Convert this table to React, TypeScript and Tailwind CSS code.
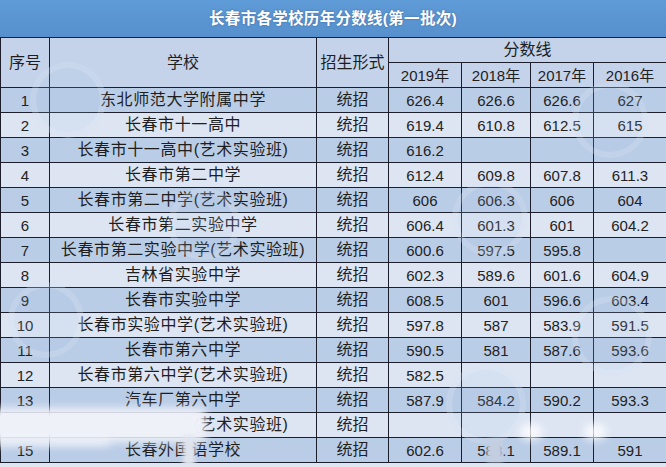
import React from 'react';

const ROWS: [string, string, string, string, string, string][] = [
  ['1', '东北师范大学附属中学', '626.4', '626.6', '626.6', '627'],
  ['2', '长春市十一高中', '619.4', '610.8', '612.5', '615'],
  ['3', '长春市十一高中(艺术实验班)', '616.2', '', '', ''],
  ['4', '长春市第二中学', '612.4', '609.8', '607.8', '611.3'],
  ['5', '长春市第二中学(艺术实验班)', '606', '606.3', '606', '604'],
  ['6', '长春市第二实验中学', '606.4', '601.3', '601', '604.2'],
  ['7', '长春市第二实验中学(艺术实验班)', '600.6', '597.5', '595.8', ''],
  ['8', '吉林省实验中学', '602.3', '589.6', '601.6', '604.9'],
  ['9', '长春市实验中学', '608.5', '601', '596.6', '603.4'],
  ['10', '长春市实验中学(艺术实验班)', '597.8', '587', '583.9', '591.5'],
  ['11', '长春市第六中学', '590.5', '581', '587.6', '593.6'],
  ['12', '长春市第六中学(艺术实验班)', '582.5', '', '', ''],
  ['13', '汽车厂第六中学', '587.9', '584.2', '590.2', '593.3'],
  ['14', '汽车厂第六中学(艺术实验班)', '', '', '', ''],
  ['15', '长春外国语学校', '602.6', '588.1', '589.1', '591'],
];

// faint round watermarks [left, top, size]
const MARKS: [number, number, number][] = [
  [30, 62, 76],
  [572, 82, 76],
  [168, 188, 72],
  [452, 180, 76],
  [8, 282, 76],
  [572, 296, 80],
  [446, 364, 80],
];

const cell = 'border border-[#1c1f2b] text-center p-0 leading-none';

export default function App() {
  return (
    <div className="relative w-[666px] h-[467px] overflow-hidden bg-[#dfe6f3] font-['Liberation_Sans','Noto_Sans_CJK_SC',sans-serif] text-[#1e1e1e]">
      {/* title bar */}
      <div className="h-[37px] bg-gradient-to-b from-[#5f9bd6] to-[#5690cd] flex items-center justify-center">
        <span className="text-white font-bold text-[15.5px] tracking-[0.3px] [text-shadow:0_0_2px_rgba(40,70,120,0.6)]">
          长春市各学校历年分数线(第一批次)
        </span>
      </div>

      <table className="border-collapse table-fixed w-[666px]">
        <colgroup>
          <col className="w-[49px]" />
          <col className="w-[267px]" />
          <col className="w-[72px]" />
          <col className="w-[73px]" />
          <col className="w-[69px]" />
          <col className="w-[63px]" />
          <col className="w-[73px]" />
        </colgroup>
        <thead className="bg-[#c4d3ea] text-[16px]">
          <tr className="h-[25px]">
            <th rowSpan={2} className={`${cell} font-normal`}>序号</th>
            <th rowSpan={2} className={`${cell} font-normal`}>学校</th>
            <th rowSpan={2} className={`${cell} font-normal`}>招生形式</th>
            <th colSpan={4} className={`${cell} font-normal`}>分数线</th>
          </tr>
          <tr className="h-[25px] text-[15px]">
            <th className={`${cell} font-normal`}>2019年</th>
            <th className={`${cell} font-normal`}>2018年</th>
            <th className={`${cell} font-normal`}>2017年</th>
            <th className={`${cell} font-normal`}>2016年</th>
          </tr>
        </thead>
        <tbody>
          {ROWS.map(([no, school, a, b, c, d], i) => (
            <tr key={no} className={`h-[25px] ${i % 2 === 0 ? 'bg-[#bacde7]' : 'bg-[#dde5f3]'}`}>
              <td className={`${cell} text-[15px] text-[#222]`}>{no}</td>
              <td className={`${cell} text-[16px] tracking-[0.6px]`}>{school}</td>
              <td className={`${cell} text-[16px]`}>统招</td>
              <td className={`${cell} text-[15px] text-[#222]`}>{a}</td>
              <td className={`${cell} text-[15px] text-[#222]`}>{b}</td>
              <td className={`${cell} text-[15px] text-[#222]`}>{c}</td>
              <td className={`${cell} text-[15px] text-[#222]`}>{d}</td>
            </tr>
          ))}
        </tbody>
      </table>

      {/* watermarks */}
      {MARKS.map(([x, y, s], i) => (
        <div
          key={i}
          className="absolute rounded-full border-[6px] border-white/15 bg-[#a9c3e4]/15 pointer-events-none"
          style={{ left: x, top: y, width: s, height: s }}
        />
      ))}

      {/* smudges over the bottom rows */}
      <div className="absolute left-[-20px] top-[408px] w-[225px] h-[34px] bg-[#eef1f8] blur-[4px] pointer-events-none" />
      <div className="absolute left-[-10px] top-[438px] w-[120px] h-[8px] bg-[#f3f5fa]/80 blur-[4px] pointer-events-none" />
      <div className="absolute left-[183px] top-[436px] w-[12px] h-[30px] bg-[#dfe3ec] blur-[2px] pointer-events-none" />
      <div className="absolute left-[487px] top-[440px] w-[16px] h-[22px] bg-[#c3cee0] blur-[2px] pointer-events-none" />
      <div className="absolute left-[520px] top-[424px] w-[22px] h-[16px] rounded-full bg-white/80 blur-[4px] pointer-events-none" />
      <div className="absolute left-[584px] top-[424px] w-[22px] h-[16px] rounded-full bg-white/80 blur-[4px] pointer-events-none" />
    </div>
  );
}
